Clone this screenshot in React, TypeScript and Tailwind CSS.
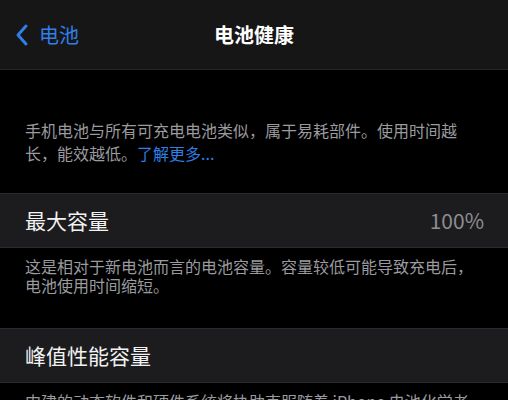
const font = {
  fontFamily: '"Noto Sans CJK SC", "Noto Sans", sans-serif',
};

function Row({ title, value }: { title: string; value?: string }) {
  return (
    <div className="flex h-[55px] items-center justify-between border-y border-[#2a2a2c] bg-[#1c1c1e] pl-[25px] pr-[24px]">
      <span className="text-[21px] text-[#f2f2f2]">{title}</span>
      {value && <span className="text-[21px] text-[#8d8d92]">{value}</span>}
    </div>
  );
}

export default function App() {
  return (
    <div className="h-[400px] w-[508px] overflow-hidden bg-black" style={font}>
      <div className="relative flex h-[70px] items-center border-b border-[#262628] bg-[#161617]">
        <div className="flex items-center pl-[14px] text-[#2f7fe6]">
          <svg width="16" height="24" viewBox="0 0 16 24" fill="none">
            <path
              d="M12 3 L4 12 L12 21"
              stroke="currentColor"
              strokeWidth="3"
              strokeLinecap="round"
              strokeLinejoin="round"
            />
          </svg>
          <span className="ml-[9px] text-[20px]">电池</span>
        </div>
        <span className="absolute left-1/2 -translate-x-1/2 text-[20px] font-bold text-white">
          电池健康
        </span>
      </div>

      <div className="px-[25px] pb-[28px] pt-[49px] text-[16px] leading-[23px] text-[#9a9a9f]">
        手机电池与所有可充电电池类似，属于易耗部件。使用时间越长，能效越低。
        <span className="text-[#2f7fe6]">了解更多...</span>
      </div>

      <Row title="最大容量" value="100%" />

      <div className="px-[25px] pb-[33px] pt-[9px] text-[16px] leading-[19px] text-[#9a9a9f]">
        这是相对于新电池而言的电池容量。容量较低可能导致充电后，电池使用时间缩短。
      </div>

      <Row title="峰值性能容量" />

      <div className="px-[25px] pt-[8px] text-[16px] leading-[20px] text-[#9a9a9f]">
        内建的动态软件和硬件系统将协助克服随着 iPhone 电池化学老化而可能出现的性能影响。
      </div>
    </div>
  );
}
